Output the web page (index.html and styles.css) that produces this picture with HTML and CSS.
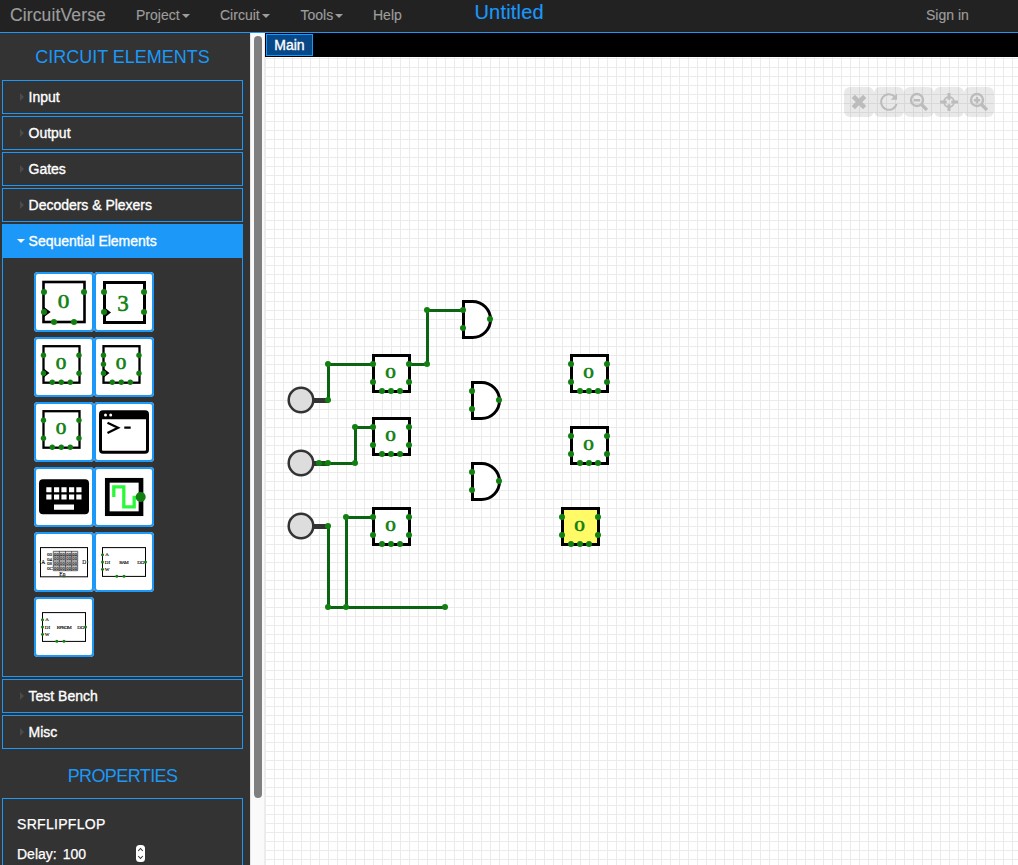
FILE: index.html
```html
<!DOCTYPE html>
<html lang="en">
<head>
<meta charset="utf-8">
<title>CircuitVerse</title>
<link rel="stylesheet" href="styles.css">
</head>
<body>
<header class="navbar">
  <a class="brand">CircuitVerse</a>
  <a class="nav-item project">Project<i class="caret"></i></a>
  <a class="nav-item circuit">Circuit<i class="caret"></i></a>
  <a class="nav-item tools">Tools<i class="caret"></i></a>
  <a class="nav-item help">Help</a>
  <span class="project-name">Untitled</span>
  <a class="nav-item sign-in">Sign in</a>
</header>
<main class="workspace">
  <aside class="sidebar">
    <h2 class="heading elements-heading"><span>CIRCUIT ELEMENTS</span></h2>
    <div class="accordion">
      <div class="panel"><i class="arrow"></i><span>Input</span></div>
      <div class="panel"><i class="arrow"></i><span>Output</span></div>
      <div class="panel"><i class="arrow"></i><span>Gates</span></div>
      <div class="panel"><i class="arrow"></i><span>Decoders &amp; Plexers</span></div>
      <div class="group">
        <div class="panel open"><i class="arrow"></i><span>Sequential Elements</span></div>
        <div class="tiles">
          <svg class="tile" viewBox="0 0 60 60"><rect x="9.5" y="10" width="41" height="40" class="box"/><path d="M10 35L16.7 40L10 45Z"/><g class="pin"><circle cx="10" cy="20" r="3"/><circle cx="50" cy="20" r="3"/><circle cx="10" cy="40" r="3"/><circle cx="20" cy="50" r="3"/><circle cx="40" cy="50" r="3"/></g><text class="digit" font-size="18" x="23.7" y="36" textLength="11.6" lengthAdjust="spacingAndGlyphs">0</text></svg>
          <svg class="tile" viewBox="0 0 60 60"><rect x="10.5" y="10.5" width="40" height="40" class="box thick"/><path d="M10 35L17 40.5L10 46Z"/><g class="pin"><circle cx="10" cy="20" r="3"/><circle cx="50" cy="20" r="3"/><circle cx="10" cy="40" r="3"/><circle cx="50" cy="40" r="3"/></g><text class="digit" font-size="23" x="23.2" y="38.7">3</text></svg>
          <svg class="tile" viewBox="0 0 60 60"><rect x="9.5" y="9.2" width="36" height="36.5" class="box thin"/><path d="M9 31L15.5 36L9 41Z"/><g class="pin"><circle cx="9.5" cy="18.3" r="2.7"/><circle cx="45" cy="18.3" r="2.7"/><circle cx="9.5" cy="36.3" r="2.7"/><circle cx="45" cy="36.3" r="2.7"/><circle cx="18.3" cy="45.3" r="2.7"/><circle cx="27.3" cy="45.3" r="2.7"/><circle cx="36.3" cy="45.3" r="2.7"/></g><text class="digit" font-size="16" x="21.7" y="32.3" textLength="10.6" lengthAdjust="spacingAndGlyphs">0</text></svg>
          <svg class="tile" viewBox="0 0 60 60"><rect x="9.5" y="9.2" width="36" height="36.5" class="box thin"/><path d="M9 31L15.5 36L9 41Z"/><g class="pin"><circle cx="9.5" cy="18.3" r="2.7"/><circle cx="9.5" cy="27.3" r="2.7"/><circle cx="45" cy="18.3" r="2.7"/><circle cx="9.5" cy="36.3" r="2.7"/><circle cx="45" cy="36.3" r="2.7"/><circle cx="18.3" cy="45.3" r="2.7"/><circle cx="27.3" cy="45.3" r="2.7"/><circle cx="36.3" cy="45.3" r="2.7"/></g><text class="digit" font-size="16" x="21.7" y="32.3" textLength="10.6" lengthAdjust="spacingAndGlyphs">0</text></svg>
          <svg class="tile" viewBox="0 0 60 60"><rect x="9.5" y="9.2" width="36" height="36.5" class="box thin"/><g class="pin"><circle cx="9.5" cy="18.3" r="2.7"/><circle cx="45" cy="18.3" r="2.7"/><circle cx="9.5" cy="36.3" r="2.7"/><circle cx="45" cy="36.3" r="2.7"/><circle cx="18.3" cy="45.3" r="2.7"/><circle cx="27.3" cy="45.3" r="2.7"/><circle cx="36.3" cy="45.3" r="2.7"/></g><text class="digit" font-size="16" x="21.7" y="32.3" textLength="10.6" lengthAdjust="spacingAndGlyphs">0</text></svg>
          <svg class="tile" viewBox="0 0 60 60"><rect x="6.5" y="9.8" width="47" height="40.5" rx="2.5" class="box thick"/><path d="M6 9H54V17.3H6Z"/><circle cx="11.5" cy="13" r="1.5" fill="#fff"/><circle cx="16.7" cy="13" r="1.5" fill="#fff"/><path d="M13.5 20.8L24 25.7L13.5 31M30.3 25.7H36.7" fill="none" stroke="#000" stroke-width="2.3"/></svg>
          <svg class="tile" viewBox="0 0 60 60"><rect x="5" y="12.3" width="50" height="35" rx="4"/><path fill="#fff" d="M12.3 20.3h5.2v5h-5.2zM20 20.3h5.2v5h-5.2zM27.4 20.3h5.2v5h-5.2zM35 20.3h5.2v5h-5.2zM42.3 20.3h5.2v5h-5.2zM12.3 27.5h5.2v5h-5.2zM20 27.5h5.2v5h-5.2zM27.4 27.5h5.2v5h-5.2zM35 27.5h5.2v5h-5.2zM42.3 27.5h5.2v5h-5.2zM20 37.4h20v5.3H20z"/></svg>
          <svg class="tile" viewBox="0 0 60 60"><rect x="13.3" y="13.3" width="33.7" height="33.4" fill="#fff" stroke="#000" stroke-width="4.7"/><path d="M19.8 30V19.8H29.8V39.9H40.2V30.5H44" fill="none" stroke="#2cf83a" stroke-width="3.3"/><circle class="pin" cx="46.7" cy="30" r="5"/></svg>
          <svg class="tile tiny" viewBox="0 0 60 60"><rect x="6.5" y="15.6" width="47" height="29.2" class="line"/><rect x="19.3" y="19.3" width="24.4" height="19.4" fill="#ddd"/><path d="M19.3 19.3H43.7V38.7H19.3ZM19.3 24.1H43.7M19.3 29H43.7M19.3 33.8H43.7M25.4 19V39M31.5 19V39M37.6 19V39" fill="none" stroke="#333" stroke-width=".7"/><g class="cells"><text x="20" y="23.5" textLength="23">00 00 00 00</text><text x="20" y="28.3" textLength="23">00 00 00 00</text><text x="20" y="33.1" textLength="23">00 00 00 00</text><text x="20" y="38" textLength="23">00 00 00 00</text></g><text x="7.2" y="32" font-size="5.5">A</text><text x="48.3" y="32" font-size="5.5">D</text><text x="13" y="24">00</text><text x="13" y="28.6">04</text><text x="13" y="33.3">08</text><text x="13" y="38">0C</text><text x="25.3" y="44" font-size="5.5">En</text><g class="pin"><circle cx="6.3" cy="30" r=".8"/><circle cx="53.7" cy="30" r=".8"/><circle cx="30" cy="44.5" r="1"/></g></svg>
          <svg class="tile tiny" viewBox="0 0 60 60"><rect x="8.5" y="15.6" width="43" height="28.8" class="line"/><text x="11.2" y="24">A</text><text x="10.8" y="31.5">DI</text><text x="10.8" y="38.5">W</text><text x="25.2" y="31.5" textLength="9.5">RAM</text><text x="43.2" y="31.5">DO</text><g class="pin"><circle cx="8.5" cy="22.7" r="1.5"/><circle cx="8.5" cy="30" r="1.5"/><circle cx="8.5" cy="37.2" r="1.5"/><circle cx="51.5" cy="30" r="1.5"/><circle cx="22.8" cy="44.2" r="1.5"/><circle cx="30" cy="44.2" r="1.5"/></g></svg>
          <svg class="tile tiny" viewBox="0 0 60 60"><rect x="8.5" y="15.6" width="43" height="28.8" class="line"/><text x="11.2" y="24">A</text><text x="10.8" y="31.5">DI</text><text x="10.8" y="38.5">W</text><text x="22.8" y="31.5" textLength="14.8">EPROM</text><text x="43.2" y="31.5">DO</text><g class="pin"><circle cx="8.5" cy="22.7" r="1.5"/><circle cx="8.5" cy="30" r="1.5"/><circle cx="8.5" cy="37.2" r="1.5"/><circle cx="51.5" cy="30" r="1.5"/><circle cx="22.8" cy="44.2" r="1.5"/><circle cx="30" cy="44.2" r="1.5"/></g></svg>
        </div>
      </div>
      <div class="panel"><i class="arrow"></i><span>Test Bench</span></div>
      <div class="panel"><i class="arrow"></i><span>Misc</span></div>
    </div>
    <h2 class="heading properties-heading"><span>PROPERTIES</span></h2>
    <div class="properties">
      <div class="element-name">SRFLIPFLOP</div>
      <div class="field"><span>Delay:</span><span class="value">100</span>
        <svg class="stepper" viewBox="0 0 9 17"><rect width="9" height="17" rx="3.5" fill="#fff"/><path d="M2.2 6L4.5 3.5L6.8 6M2.2 11L4.5 13.5L6.8 11" fill="none" stroke="#333" stroke-width="1.1"/></svg>
      </div>
    </div>
  </aside>
  <div class="scrollbar"><div class="thumb"></div></div>
  <section class="editor">
    <div class="tabs"><span class="tab">Main</span></div>
    <div class="canvas">
      <svg class="circuit-view" viewBox="265 57 753 808">
        <defs>
          <pattern id="grid" x="265" y="58" width="9" height="9" patternUnits="userSpaceOnUse"><path d="M0 0H9V1H1V9H0Z" fill="#ebebeb"/></pattern>
          <g id="ff-pins" class="pin"><circle cx="-18" cy="-9" r="3"/><circle cx="-18" cy="9" r="3"/><circle cx="18" cy="-9" r="3"/><circle cx="18" cy="9" r="3"/><circle cx="-9" cy="18" r="3"/><circle cy="18" r="3"/><circle cx="9" cy="18" r="3"/></g>
          <g id="and"><path d="M-17.5 -17.5H-8.5A18 18 0 0 1 -8.5 18.5H-17.5Z" fill="#fff" stroke="#000" stroke-width="3"/><g class="pin"><circle cx="-18" cy="-9" r="3"/><circle cx="-18" cy="9" r="3"/><circle cx="9" cy="0" r="3"/></g></g>
          <g id="input"><path d="M13 .5H28" stroke="#333" stroke-width="5"/><circle r="12.3" fill="#ddd" stroke="#333" stroke-width="2.5"/></g>
        </defs>
        <rect x="265" y="57" width="753" height="808" fill="url(#grid)"/>
        <use href="#input" x="301" y="400"/><use href="#input" x="301" y="463"/><use href="#input" x="301" y="526"/>
        <path class="wire" d="M328.5 400V364.5H373M409 364.5H427.5V310.5H463M319 463.5H355.5V427.5H373M328.5 526V607.5H445M346.5 607V517.5H373"/>
        <g class="flipflops">
          <g transform="translate(391 373)"><rect x="-17.5" y="-17.5" width="36" height="36" class="box thick"/><use href="#ff-pins"/><text class="digit" x="-5.8" y="5" textLength="10.6" lengthAdjust="spacingAndGlyphs">0</text></g>
          <g transform="translate(391 436)"><rect x="-17.5" y="-17.5" width="36" height="36" class="box thick"/><use href="#ff-pins"/><text class="digit" x="-5.8" y="5" textLength="10.6" lengthAdjust="spacingAndGlyphs">0</text></g>
          <g transform="translate(391 526)"><rect x="-17.5" y="-17.5" width="36" height="36" class="box thick"/><use href="#ff-pins"/><text class="digit" x="-5.8" y="5" textLength="10.6" lengthAdjust="spacingAndGlyphs">0</text></g>
          <g transform="translate(589 373)"><rect x="-17.5" y="-17.5" width="36" height="36" class="box thick"/><use href="#ff-pins"/><text class="digit" x="-5.8" y="5" textLength="10.6" lengthAdjust="spacingAndGlyphs">0</text></g>
          <g transform="translate(589 445)"><rect x="-17.5" y="-17.5" width="36" height="36" class="box thick"/><use href="#ff-pins"/><text class="digit" x="-5.8" y="5" textLength="10.6" lengthAdjust="spacingAndGlyphs">0</text></g>
          <g transform="translate(580 526)"><rect x="-17.5" y="-17.5" width="36" height="36" class="box thick selected"/><use href="#ff-pins"/><text class="digit" x="-5.8" y="5" textLength="10.6" lengthAdjust="spacingAndGlyphs">0</text></g>
        </g>
        <use href="#and" x="481" y="319"/><use href="#and" x="490" y="400"/><use href="#and" x="490" y="481"/>
        <g class="pin"><circle cx="328" cy="400" r="3"/><circle cx="328" cy="364" r="3"/><circle cx="427" cy="364" r="3"/><circle cx="427" cy="310" r="3"/><circle cx="319" cy="463" r="3"/><circle cx="328" cy="463" r="3"/><circle cx="355" cy="463" r="3"/><circle cx="355" cy="427" r="3"/><circle cx="328" cy="526" r="3"/><circle cx="328" cy="607" r="3"/><circle cx="346" cy="607" r="3"/><circle cx="445" cy="607" r="3"/><circle cx="346" cy="517" r="3"/></g>
      </svg>
      <div class="quick-buttons">
        <svg viewBox="0 0 30 30"><path d="M9.3 9.3L20.7 20.7M20.7 9.3L9.3 20.7" stroke-width="4.6"/></svg>
        <svg viewBox="0 0 30 30"><path d="M20.6 9.6A7.8 7.8 0 1 0 22.5 17" stroke-width="2"/><path class="solid" d="M23 6.5V12.8H16.7Z"/></svg>
        <svg viewBox="0 0 30 30"><circle cx="13" cy="13" r="6" stroke-width="2.4"/><path d="M17.5 17.5L23 23" stroke-width="3.2"/><path d="M9.8 13.2H16.2" stroke-width="2.4"/></svg>
        <svg viewBox="0 0 30 30"><circle cx="15" cy="15" r="5" stroke-width="1.8"/><path d="M15 6V12.7M15 17.3V24M6 15H12.7M17.3 15H24" stroke-width="3"/></svg>
        <svg viewBox="0 0 30 30"><circle cx="13" cy="13" r="6" stroke-width="2.4"/><path d="M17.5 17.5L23 23" stroke-width="3.2"/><path d="M9.8 13.2H16.2M13 10V16.4" stroke-width="2.4"/></svg>
      </div>
    </div>
  </section>
</main>
</body>
</html>
```

FILE: styles.css
```css
* { box-sizing: border-box; }
body { margin: 0; height: 865px; overflow: hidden; display: flex; flex-direction: column; font-family: "Liberation Sans", Arial, sans-serif; background: #fff; }
.navbar { height: 33px; flex: none; display: flex; background: #222; border-bottom: 1px solid #1b98f8; color: #9d9d9d; padding: 0 10px; white-space: nowrap; line-height: 30px; font-size: 14px; -webkit-text-stroke: .15px; }
.brand { width: 126px; font-size: 17.5px; letter-spacing: .13px; }
.project { width: 84px; }
.circuit { width: 80.5px; }
.tools { width: 72.5px; }
.help { width: 101.5px; }
.caret { display: inline-block; margin-left: 2px; vertical-align: middle; border: 4px solid transparent; border-top-color: #9d9d9d; border-bottom: 0; }
.project-name { flex: 1; line-height: 24px; font-size: 20px; letter-spacing: .18px; color: #1b98f8; }
.sign-in { width: 82px; }
.workspace { flex: 1; min-height: 0; display: flex; }
.sidebar { width: 250px; flex: none; background: #333; padding-left: 2px; overflow: hidden; color: #fff; }
.heading { margin: 0; width: 241px; text-align: center; font-size: 18px; line-height: 20px; font-weight: 400; color: #1b98f8; }
.elements-heading { padding: 14px 0 13px; }
.properties-heading { padding: 17px 0 12px; letter-spacing: -.6px; }
.accordion { width: 241px; display: flex; flex-direction: column; gap: 2px; font-size: 14px; -webkit-text-stroke: .35px #fff; }
.panel { height: 34px; border: 1px solid #1b98f8; display: flex; align-items: center; padding-left: 17px; letter-spacing: -.02px; }
.arrow { width: 8.6px; flex: none; }
.arrow::before { content: ""; display: block; width: 0; border: 4px solid transparent; border-left-color: #4b4b4b; border-right: 0; }
.group { height: 453px; border: 1px solid #1b98f8; border-top: 0; }
.open { margin: 0 -1px; background: #1b98f8; padding-left: 13.6px; }
.open .arrow { width: 12px; }
.open .arrow::before { margin-top: -1px; border: 4px solid transparent; border-top-color: #fff; border-bottom: 0; }
.tiles { padding: 14px 0 0 31px; display: grid; grid-template-columns: 60px 60px; row-gap: 5px; -webkit-text-stroke: 0; }
.tile { width: 60px; height: 60px; background: #fff; border-radius: 4px; box-shadow: inset 0 0 0 2px #1b98f8; display: block; }
.box { fill: #fff; stroke: #000; stroke-width: 2.6; }
.box.thick { stroke-width: 3; }
.box.thin { stroke-width: 2.3; }
.box.selected { fill: #fffa66; }
.line { fill: #fff; stroke: #000; stroke-width: 1; }
.pin { fill: #118011; }
.digit { fill: #118011; stroke: #118011; stroke-width: .5px; font-family: "Liberation Serif", serif; }
.flipflops { font-size: 15px; }
.tiny { font: 5px "Liberation Serif", serif; }
.tiny text { stroke: #000; stroke-width: .12px; }
.cells { font-size: 4.5px; }
.properties { width: 241px; height: 100px; border: 1px solid #1b98f8; padding: 16px 14px; font-size: 14px; line-height: 19px; -webkit-text-stroke: .25px #fff; }
.element-name { letter-spacing: .3px; }
.field { display: flex; padding-top: 11px; }
.value { width: 73px; margin-left: 6px; }
.stepper { width: 9px; height: 17px; }
.scrollbar { width: 15px; flex: none; padding: 3px 3px 0 4px; background: #fafafa; border-left: 1px solid #e5e5e5; border-right: 1px solid #ededed; }
.scrollbar .thumb { width: 8px; height: 762px; margin-left: -1px; border-radius: 4px; background: #7f7f7f; }
.editor { flex: 1; min-width: 0; display: flex; flex-direction: column; }
.tabs { height: 24px; flex: none; background: #000; padding: 1px; }
.tab { display: block; width: 47px; height: 22px; background: #084887; border: 1px solid #1b98f8; color: #fff; font-size: 14px; line-height: 20px; text-align: center; -webkit-text-stroke: .35px #fff; }
.canvas { flex: 1; position: relative; }
.circuit-view { width: 753px; height: 808px; display: block; }
.wire { fill: none; stroke: #0b6412; stroke-width: 3; }
.quick-buttons { position: absolute; top: 30px; right: 24px; display: flex; }
.quick-buttons svg { width: 30px; height: 30px; border-radius: 6px; background: rgba(120,120,120,.16); fill: none; stroke: #bcbcbc; }
.quick-buttons .solid { fill: #bcbcbc; stroke: none; }
```
